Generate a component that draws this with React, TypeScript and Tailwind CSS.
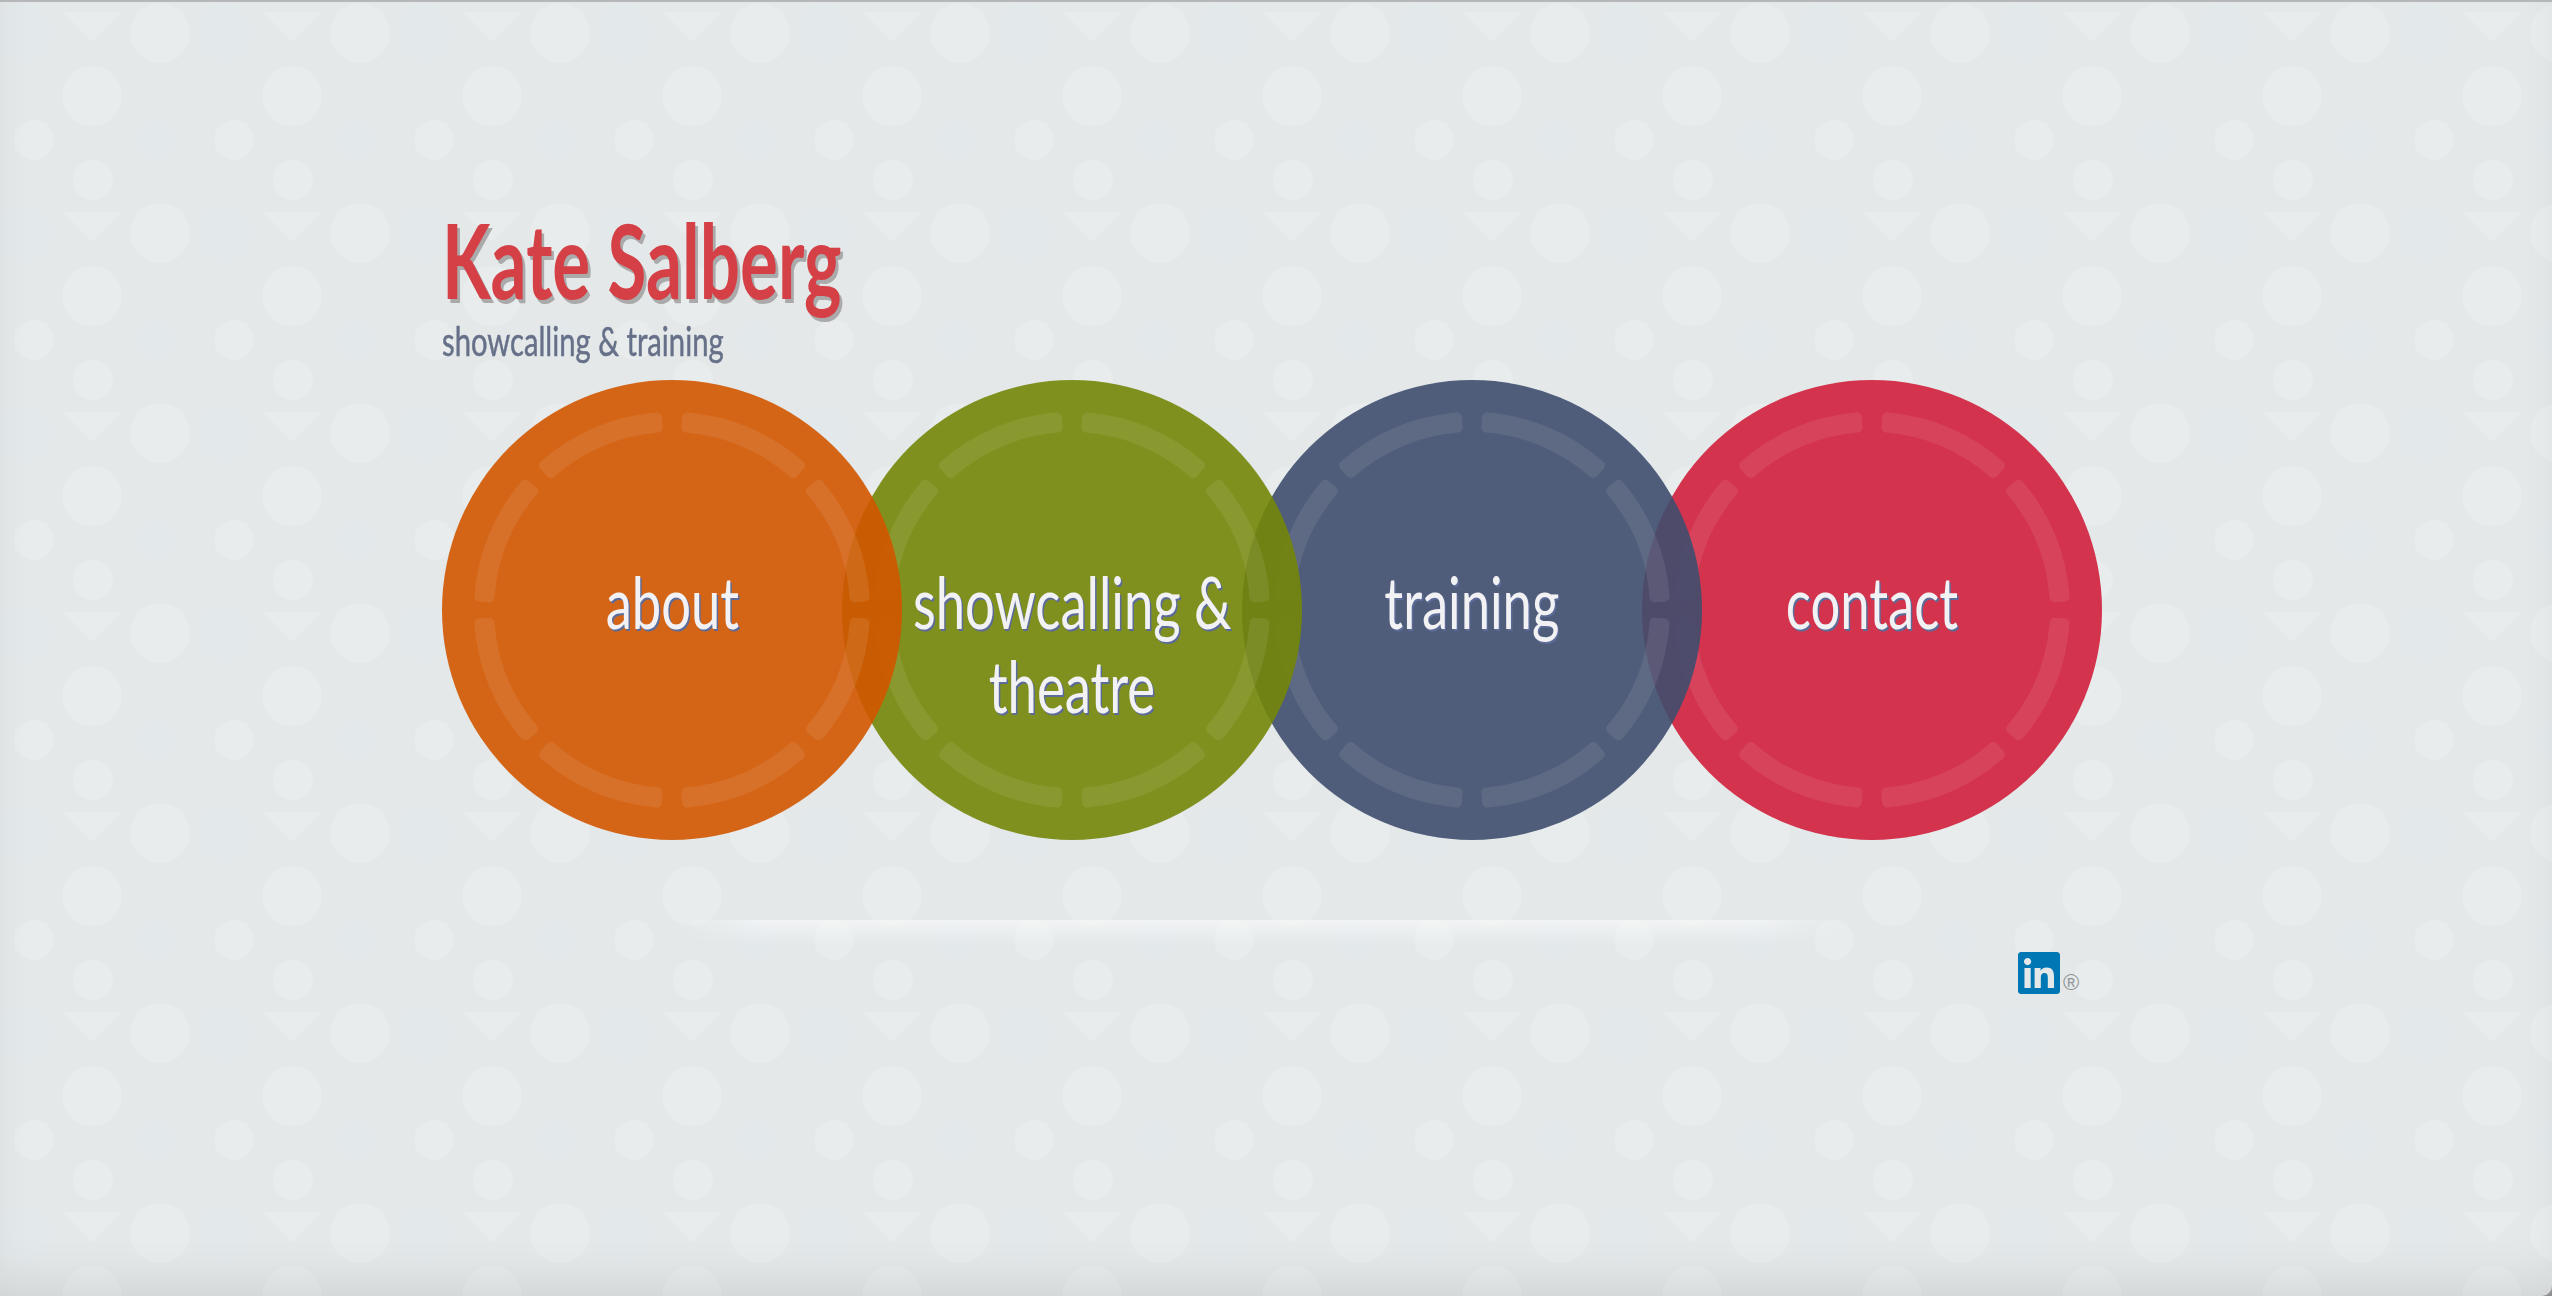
import { FaLinkedin } from 'react-icons/fa';

// tile of the background: [cx, cy, r]. bright circles and faint ones
const brightDots = [
  [160, 33, 30],
  [92, 96, 30],
  [34, 140, 20],
  [93, 180, 20],
];
const faintDots = [
  [24, 33, 30],
  [156, 140, 20],
];

const polar = (r: number, deg: number) => {
  const a = ((deg - 90) * Math.PI) / 180;
  return `${230 + r * Math.cos(a)} ${230 + r * Math.sin(a)}`;
};

// one dash of the ring: annular sector, the stroke rounds its corners
function dashPath(from: number, to: number) {
  const outer = 193;
  const inner = 183;
  return `M${polar(outer, from)} A${outer} ${outer} 0 0 1 ${polar(outer, to)} L${polar(inner, to)} A${inner} ${inner} 0 0 0 ${polar(inner, from)} Z`;
}

const dashes = [
  [4.5, 41.5],
  [49.5, 86],
  [94, 130.5],
  [138.5, 175.5],
  [184.5, 221.5],
  [229.5, 266],
  [274, 310.5],
  [318.5, 355.5],
];

function Ring() {
  return (
    <svg viewBox="0 0 460 460" className="absolute inset-0 h-full w-full opacity-[0.08]">
      {dashes.map(([from, to]) => (
        <path key={from} d={dashPath(from, to)} fill="#fff" stroke="#fff" strokeWidth={10} strokeLinejoin="round" />
      ))}
    </svg>
  );
}

const circles = [
  { lines: ['about'], color: 'bg-[#d25600]/90', z: 'z-40', first: true },
  { lines: ['showcalling &', 'theatre'], color: 'bg-[#738608]/90', z: 'z-30' },
  { lines: ['training'], color: 'bg-[#3f4e6e]/90', z: 'z-20' },
  { lines: ['contact'], color: 'bg-[#d01f3c]/90', z: 'z-10' },
];

export default function App() {
  return (
    <div className="bg-[#8f8f8f]">
      <div className="relative h-[1296px] overflow-hidden rounded-br-[10px] border-t-2 border-[#b5b7ba] bg-[#e4e8e9] font-['Lato',sans-serif]">
        <svg className="absolute inset-0 h-full w-full">
          <defs>
            <pattern id="tile" width="200" height="200" patternUnits="userSpaceOnUse" y="-2">
              {faintDots.map(([cx, cy, r]) => (
                <circle key={cx} cx={cx} cy={cy} r={r} fill="#e3e8eb" />
              ))}
              {brightDots.map(([cx, cy, r]) => (
                <circle key={cx} cx={cx} cy={cy} r={r} fill="#e8ecec" />
              ))}
              <path d="M63 12 H122 L92.5 42 Z" fill="#e8ecec" />
            </pattern>
          </defs>
          <rect width="100%" height="100%" fill="url(#tile)" />
        </svg>
        <div className="pointer-events-none absolute inset-0 shadow-[inset_0_-30px_50px_-20px_rgba(0,0,0,0.1)]" />

        <div className="relative ml-[442px] w-[1660px] pt-[202px]">
          <h1 className="origin-left scale-x-[0.683] whitespace-nowrap text-[104px] font-bold leading-[110px] text-[#d44045] [text-shadow:4px_4px_0_#aaaaaa]">
            Kate Salberg
          </h1>
          <p className="mt-[4px] origin-left scale-x-[0.73] whitespace-nowrap text-[40px] leading-[46px] text-[#667088] [-webkit-text-stroke:0.5px_#667088]">
            showcalling &amp; training
          </p>

          <div className="mt-[16px] flex">
            {circles.map((c) => (
              <a
                key={c.lines[0]}
                className={`relative flex h-[460px] w-[460px] shrink-0 flex-col items-center rounded-full pt-[179px] text-[72px] leading-[84px] text-[#f2f2f5] [text-shadow:2px_2px_0_#5d6b99] ${c.color} ${c.z} ${c.first ? '' : '-ml-[60px]'}`}
              >
                <Ring />
                {c.lines.map((line) => (
                  <span key={line} className="relative scale-x-[0.73] whitespace-nowrap">
                    {line}
                  </span>
                ))}
              </a>
            ))}
          </div>

          <div className="relative mt-[80px] h-[30px]">
            <div className="absolute left-[228px] top-0 h-[26px] w-[1180px] bg-gradient-to-b from-white/50 to-transparent [mask-image:linear-gradient(to_right,transparent,black_8%,black_92%,transparent)]" />
            <div className="absolute left-[1573px] top-[29px] flex items-end">
              <FaLinkedin className="h-[48px] w-[48px] text-[#0077b5]" />
              <span className="mb-[4px] font-['Liberation_Sans'] text-[22px] leading-[20px] text-[#8f9496]">®</span>
            </div>
          </div>
        </div>
      </div>
    </div>
  );
}
